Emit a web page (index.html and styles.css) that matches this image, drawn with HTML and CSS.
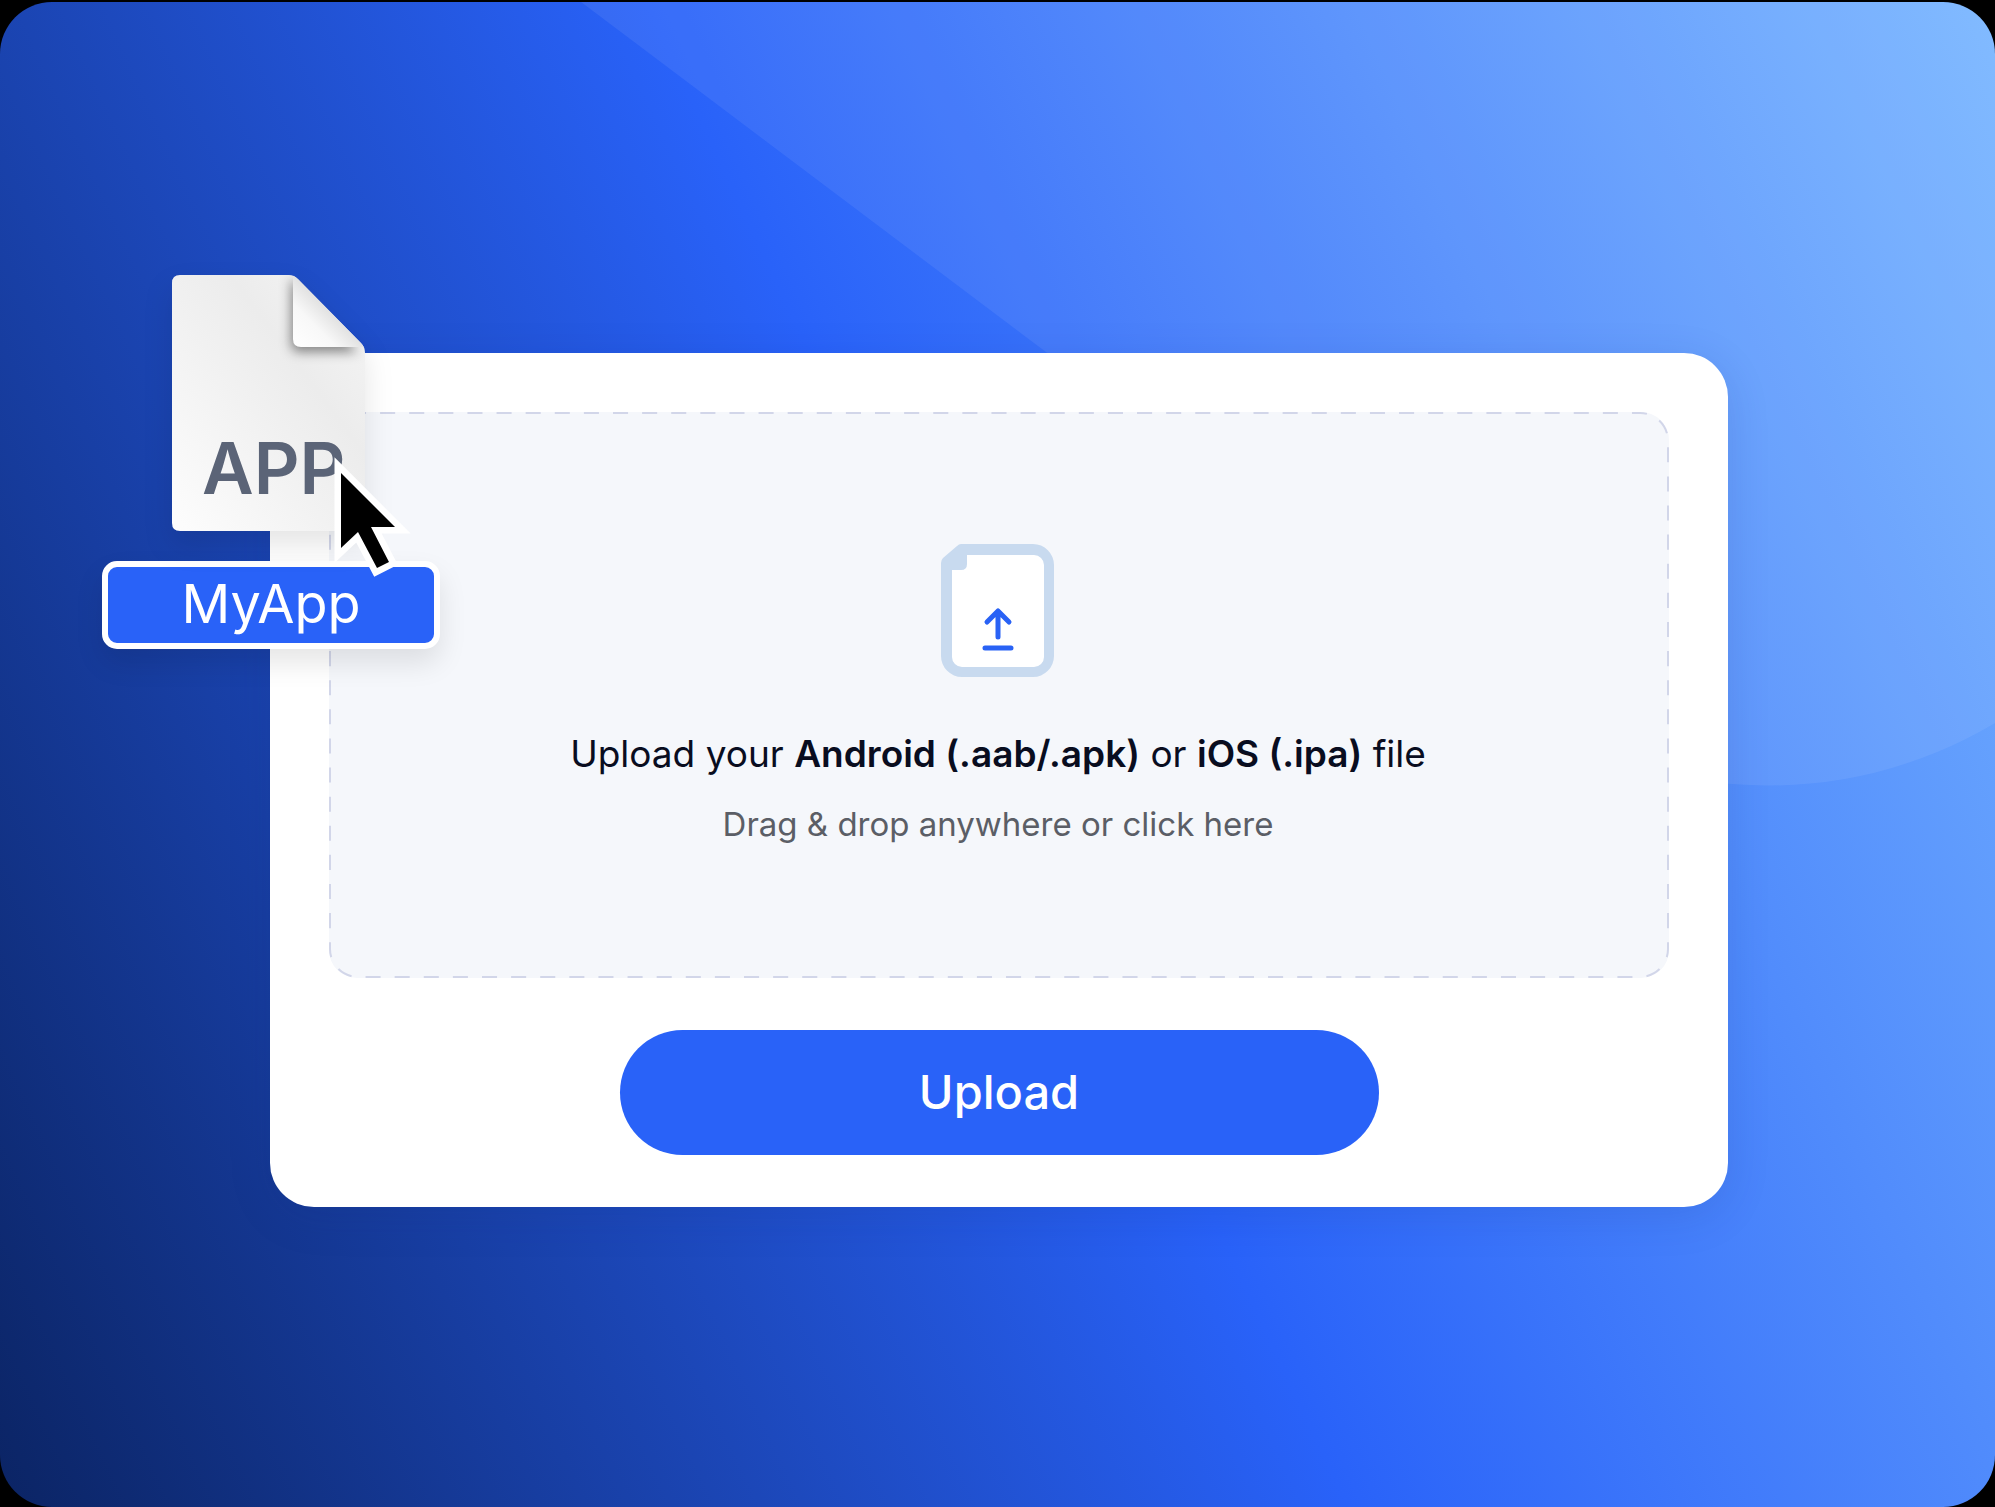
FILE: index.html
```html
<!DOCTYPE html>
<html lang="en">
<head>
<meta charset="utf-8">
<meta name="viewport" content="width=device-width, initial-scale=1">
<title>Upload your app</title>
<link rel="stylesheet" href="styles.css">
</head>
<body>
<main class="stage">
  <svg class="stage-shape" viewBox="0 0 1995 1505" preserveAspectRatio="none" aria-hidden="true">
    <path d="M581 0L1503 694A440 440 0 0 0 1995 721V0Z" fill="#fff" fill-opacity=".07"/>
  </svg>
  <section class="card">
    <div class="dropzone">
      <svg class="dropzone-outline" aria-hidden="true">
        <rect class="dropzone-dash" width="100%" height="100%" rx="28" pathLength="3741"/>
      </svg>
      <svg class="upload-icon" viewBox="0 0 114 134" aria-hidden="true">
        <path d="M20 0H92A21 21 0 0 1 113 21V112A21 21 0 0 1 92 133H21A21 21 0 0 1 0 112V19Q0 16 2 14L16 2Q18 0 20 0Z" fill="#c8daef"/>
        <path d="M26 11H93A10 10 0 0 1 103 21V113A10 10 0 0 1 93 123H21A10 10 0 0 1 11 113V26H20Q26 26 26 20Z" fill="#fff"/>
        <path d="M57 93V67M46 78L57 67L68 78M44 104H70" fill="none" stroke="#2962f5" stroke-width="5" stroke-linecap="round" stroke-linejoin="round"/>
      </svg>
      <p class="title">Upload your <strong>Android (.aab/.apk)</strong> or <strong>iOS (.ipa)</strong> file</p>
      <p class="hint">Drag &amp; drop anywhere or click here</p>
    </div>
    <button class="upload-button" type="button">Upload</button>

    <div class="drag-item">
      <svg class="file-icon" viewBox="0 0 198 256" role="img" aria-label="APP file">
        <defs>
          <linearGradient id="paper" x1="0" y1="1" x2="1" y2="0">
            <stop offset="0" stop-color="#fdfdfd"/>
            <stop offset=".45" stop-color="#f1f1f1"/>
            <stop offset=".65" stop-color="#ececec"/>
            <stop offset="1" stop-color="#f6f6f6"/>
          </linearGradient>
          <linearGradient id="fold" x1="0" y1="1" x2="1" y2="0">
            <stop offset="0" stop-color="#fff"/>
            <stop offset=".3" stop-color="#f8f8f8"/>
            <stop offset=".5" stop-color="#e2e2e2"/>
          </linearGradient>
          <clipPath id="page"><path d="M8 0H117Q122 0 126 4L189 68Q193 72 193 78V248Q193 256 185 256H8Q0 256 0 248V8Q0 0 8 0Z"/></clipPath>
          <filter id="soft" x="-50%" y="-50%" width="200%" height="200%"><feGaussianBlur stdDeviation="6"/></filter>
        </defs>
        <g clip-path="url(#page)">
          <path d="M0 0H193V256H0Z" fill="url(#paper)"/>
          <path d="M119 2V68Q119 77 128 77H186Z" fill="#000" fill-opacity=".45" filter="url(#soft)"/>
          <path d="M121 0V64Q121 72 129 72H193L126 4Z" fill="url(#fold)"/>
        </g>
        <text class="file-type" x="30" y="219">APP</text>
      </svg>
      <span class="file-name">MyApp</span>
      <svg class="cursor" viewBox="0 0 84 128" aria-hidden="true">
        <path d="M10 20V95L27 79L46 115L58 109L40 74H64Z" fill="#fff" stroke="#fff" stroke-width="13" stroke-miterlimit="10"/>
        <path d="M10 20V95L27 79L46 115L58 109L40 74H64Z" fill="#000"/>
      </svg>
    </div>
  </section>
</main>
</body>
</html>
```

FILE: styles.css
```css
* {
  box-sizing: border-box;
}

body {
  margin: 0;
  padding-top: 2px;
  background: #000;
  font-family: Inter, "Liberation Sans", sans-serif;
}

.stage {
  position: relative;
  display: flex;
  align-items: center;
  justify-content: center;
  min-height: calc(100vh - 2px);
  padding: 50px 0 0 3px;
  overflow: hidden;
  border-radius: 52px;
  background: linear-gradient(65deg, #0b2464 0%, #2962f9 50%, #79b6ff 100%);
}

.stage-shape {
  position: absolute;
  inset: 0;
  width: 100%;
  height: 100%;
}

.card {
  position: relative;
  display: flex;
  flex-direction: column;
  align-items: center;
  gap: 52px;
  width: 74%;
  min-width: 1080px;
  max-width: 1458px;
  padding: 59px 59px 52px;
  border-radius: 44px;
  background: #fff;
  box-shadow: 0 10px 44px rgba(20, 50, 130, 0.14);
}

.dropzone {
  position: relative;
  display: flex;
  flex-direction: column;
  align-items: center;
  width: 100%;
  padding: 132px 26px 130px 24px;
  border-radius: 28px;
  background: #f5f7fb;
}

.dropzone-outline {
  position: absolute;
  inset: 1px;
  width: calc(100% - 2px);
  height: calc(100% - 2px);
  overflow: visible;
}

.dropzone-dash {
  fill: none;
  stroke: #d2d6e9;
  stroke-width: 2px;
  stroke-dasharray: 15 14;
  stroke-dashoffset: 7;
}

.upload-icon {
  width: 114px;
  height: 134px;
}

.title,
.hint {
  margin: 0;
  text-align: center;
}

.title {
  margin-top: 52px;
  color: #090d1f;
  font-size: 37px;
  line-height: 48px;
}

.title strong {
  font-weight: 600;
}

.hint {
  margin-top: 22px;
  color: #5b5e66;
  font-size: 33px;
  line-height: 48px;
}

.upload-button {
  width: 759px;
  height: 125px;
  border: 0;
  border-radius: 64px;
  background: #2962f8;
  color: #fff;
  font: 500 47px/48px Inter, "Liberation Sans", sans-serif;
  cursor: pointer;
}

/* The file being dragged over the card's top left corner */
.drag-item {
  position: absolute;
  top: -78px;
  left: -168px;
  display: flex;
  flex-direction: column;
  align-items: center;
  gap: 30px;
  width: 338px;
}

.file-icon {
  width: 198px;
  height: 256px;
  overflow: visible;
  filter: drop-shadow(0 14px 14px rgba(0, 0, 0, 0.1));
}

.file-type {
  fill: #5b6477;
  font-size: 71px;
  font-weight: 600;
}

.file-name {
  width: 100%;
  padding-bottom: 2px;
  border: 6px solid #fff;
  border-radius: 15px;
  background: #2962f8;
  box-shadow: 0 14px 28px rgba(0, 0, 0, 0.1);
  color: #fff;
  font-size: 54px;
  line-height: 74px;
  text-align: center;
}

.cursor {
  position: absolute;
  top: 178px;
  left: 229px;
  width: 84px;
  height: 128px;
  overflow: visible;
}
```
